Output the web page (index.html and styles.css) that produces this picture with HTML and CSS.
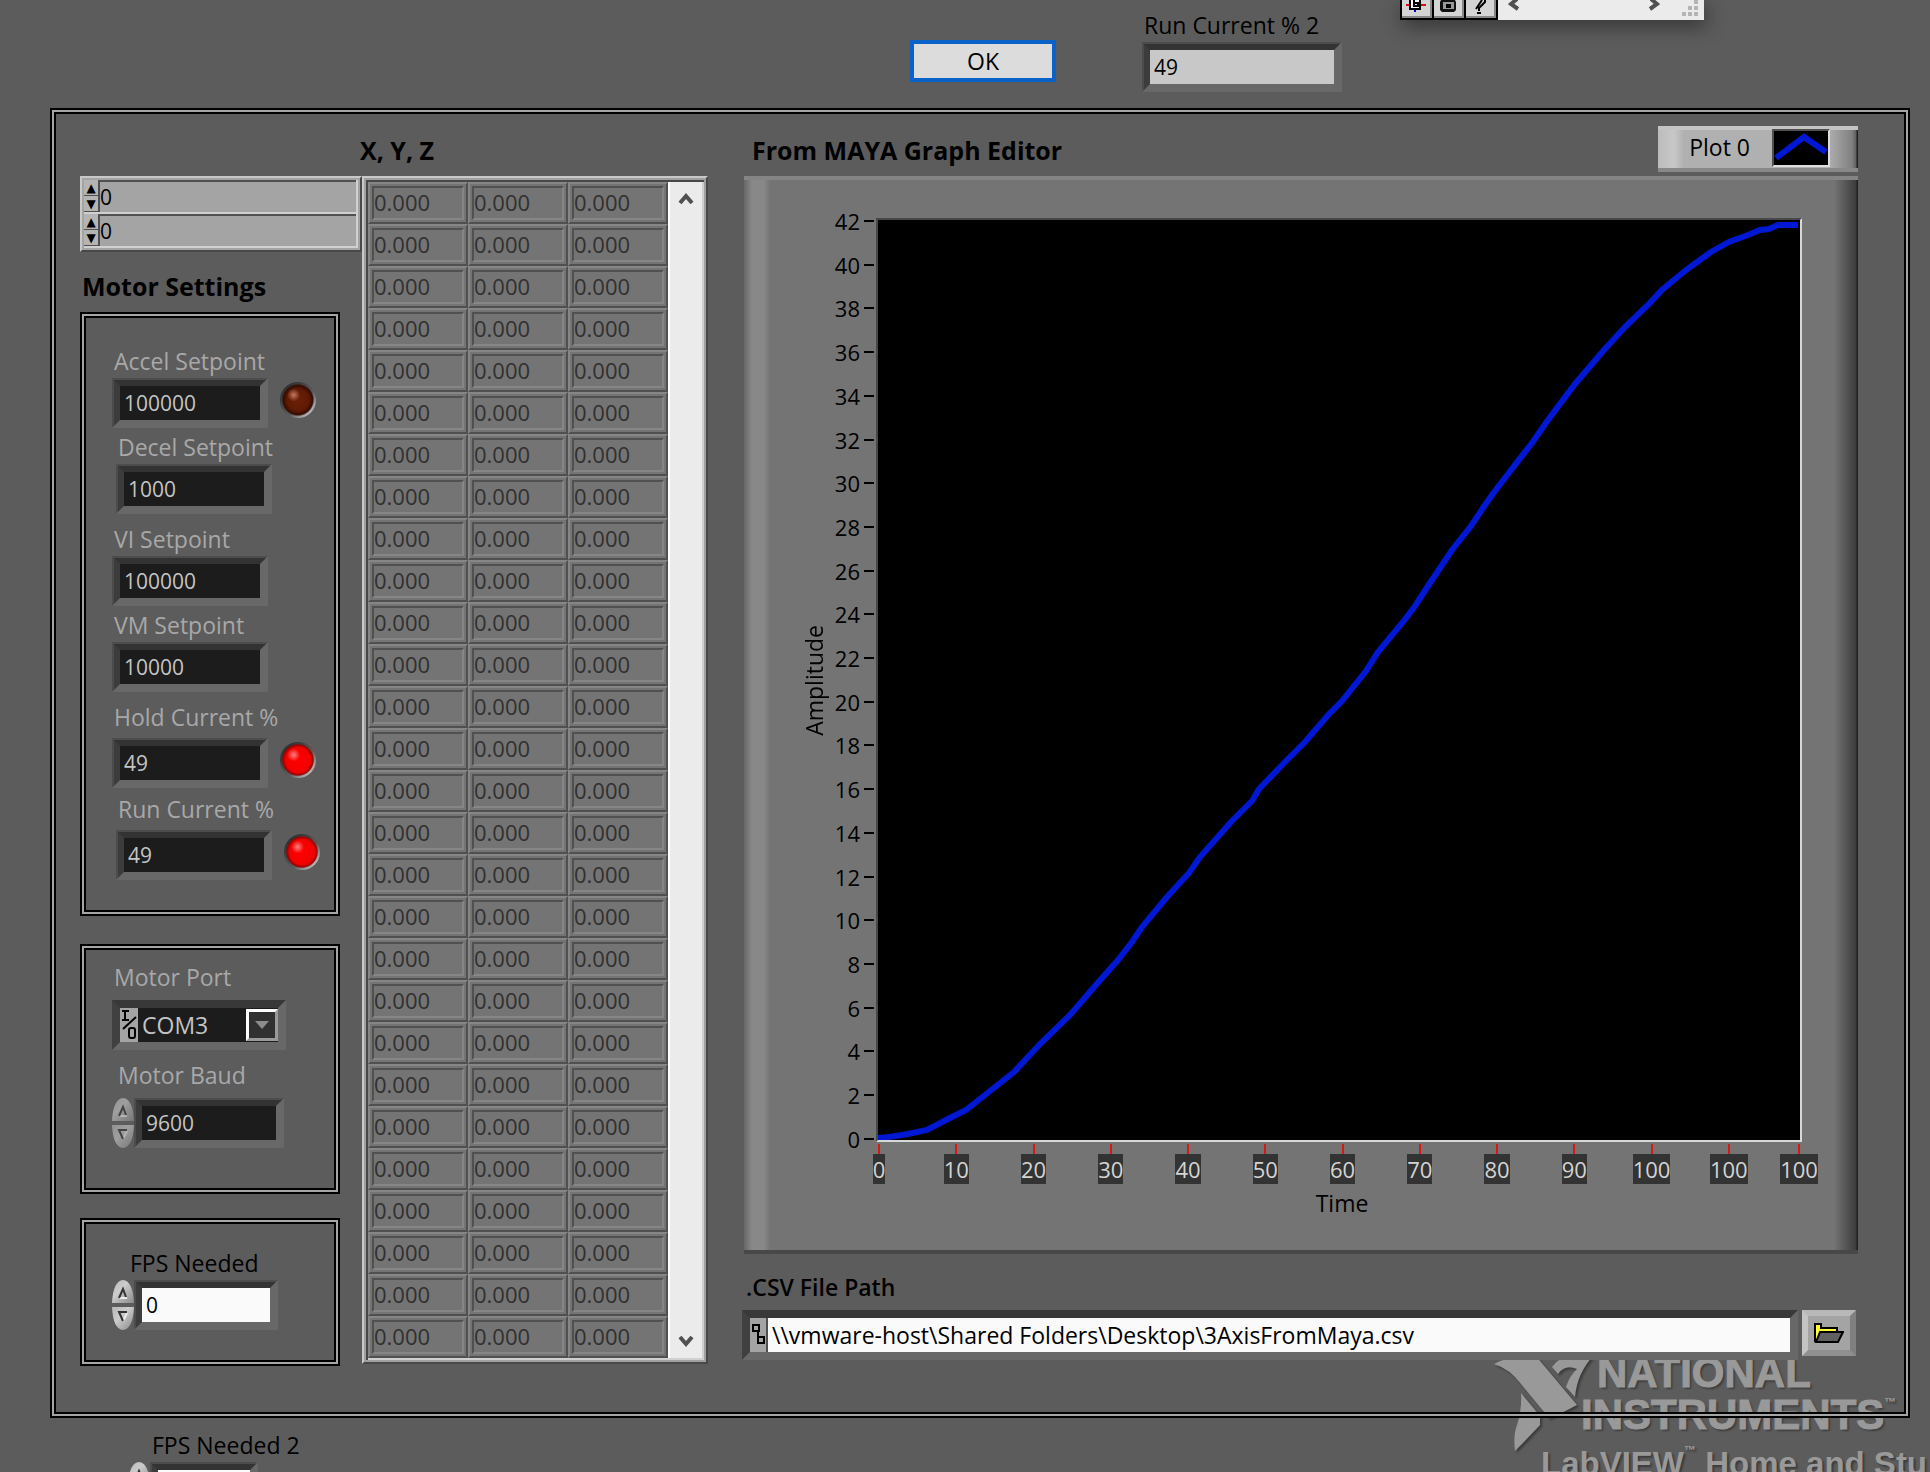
FILE: index.html
```html
<!DOCTYPE html>
<html lang="en">
<head>
<meta charset="utf-8">
<title>Motor Control</title>
<link rel="stylesheet" href="styles.css">
</head>
<body>
<div class="watermark" aria-hidden="true">
  <svg class="eagle" width="104" height="102" viewBox="0 0 104 102">
    <path d="M1 9 Q18 0 42 0 L84 50 Q70 58 56 63 L28 29 Q17 14 1 9Z"/>
    <path d="M59 12 Q68 0 82 0 L101 0 Q84 18 82 42 L73 32 Q77 20 84 14 Q72 9 65 19Z"/>
    <path d="M28 38 L47 61 L47 70 Q32 86 22 96 Q20 80 24 70 Q29 55 28 38Z"/>
  </svg>
  <div class="brand">
    <div class="brand-line brand-first">NATIONAL</div>
    <div class="brand-line">INSTRUMENTS<sup>™</sup></div>
  </div>
  <div class="product">LabVIEW<sup>™</sup> Home and Stu</div>
</div>

<div class="palette">
  <button class="tool" aria-label="Probe"><svg width="28" height="18" viewBox="0 0 28 18"><path d="M4 5h20" stroke="#d01010" stroke-width="2"/><path d="M8 0v9h10V0" fill="#fff" stroke="#000" stroke-width="2"/><path d="M12 0v6h4V3h-3" fill="none" stroke="#000" stroke-width="2"/><path d="M12 10h2v2h-2z" fill="#00c"/></svg></button>
  <button class="tool" aria-label="Lock"><svg width="28" height="18" viewBox="0 0 28 18"><path d="M7 0h14l1 2v8l-2 2H8l-2-2V2z" fill="#111"/><path d="M9 2h11v7H9z" fill="#999"/><path d="M12 4h5v4h-5z"/></svg></button>
  <button class="tool" aria-label="Help"><svg width="28" height="18" viewBox="0 0 28 18"><path d="M13 11V8l6-6V0M10 9l6-9" fill="none" stroke="#000" stroke-width="2"/><path d="M11 12h4v2h-4z"/></svg></button>
  <div class="hscroll">
    <svg width="12" height="12" viewBox="0 0 12 12"><path d="M9 -1L3 4l7 5" fill="none" stroke="#505050" stroke-width="4"/></svg>
    <svg width="12" height="12" viewBox="0 0 12 12"><path d="M3 -1l6 5-7 5" fill="none" stroke="#505050" stroke-width="4"/></svg>
  </div>
  <svg class="grip" width="16" height="16" viewBox="0 0 16 16"><path d="M12 0h4v4h-4zM6 6h4v4H6zM12 6h4v4h-4zM0 12h4v4H0zM6 12h4v4H6zM12 12h4v4h-4z" fill="#b4b4b4"/></svg>
</div>

<header class="top">
  <button class="ok">OK</button>
  <div class="group">
    <label for="run2">Run Current % 2</label>
    <div class="bevel wide"><input id="run2" class="silver" value="49"></div>
  </div>
</header>

<main class="panel frame">
  <section class="settings">
    <div class="cluster">
      <div class="cluster-row"><span class="step"><button aria-label="Increase row">▲</button><button aria-label="Decrease row">▼</button></span><input aria-label="Row index" value="0"></div>
      <div class="cluster-row"><span class="step"><button aria-label="Increase column">▲</button><button aria-label="Decrease column">▼</button></span><input aria-label="Column index" value="0"></div>
    </div>
    <h2 class="settings-title">Motor Settings</h2>

    <div class="frame box motor">
      <div class="group"><label for="accel">Accel Setpoint</label>
        <div class="line"><div class="bevel"><input id="accel" value="100000"></div><span class="led"></span></div></div>
      <div class="group near inset"><label for="decel">Decel Setpoint</label>
        <div class="bevel"><input id="decel" value="1000"></div></div>
      <div class="group far"><label for="vi">VI Setpoint</label>
        <div class="bevel"><input id="vi" value="100000"></div></div>
      <div class="group near"><label for="vm">VM Setpoint</label>
        <div class="bevel"><input id="vm" value="10000"></div></div>
      <div class="group far loose"><label for="hold">Hold Current %</label>
        <div class="line"><div class="bevel"><input id="hold" value="49"></div><span class="led on"></span></div></div>
      <div class="group near loose inset"><label for="run">Run Current %</label>
        <div class="line"><div class="bevel"><input id="run" value="49"></div><span class="led on"></span></div></div>
    </div>

    <div class="frame box port">
      <div class="group"><label for="port">Motor Port</label>
        <div class="bevel combo">
          <svg width="18" height="34" viewBox="0 0 18 34"><rect width="18" height="34" fill="#a4a4a4"/><path d="M2 3h7M5 3v9M2 12h7M3 21L16 9" fill="none" stroke="#000" stroke-width="2"/><rect x="9" y="20" width="6" height="10" rx="2" fill="none" stroke="#000" stroke-width="2"/></svg>
          <select id="port"><option>COM3</option></select>
          <span class="drop"><svg width="14" height="8" viewBox="0 0 14 8"><path d="M0 0h14L7 8z" fill="#8c8c8c"/></svg></span>
        </div>
      </div>
      <div class="group baud"><label for="baud">Motor Baud</label>
        <div class="line">
          <svg class="knob" width="22" height="50" viewBox="0 0 22 50"><use href="#knob" class="knob-dim"/></svg>
          <div class="bevel"><input id="baud" value="9600"></div>
        </div>
      </div>
    </div>

    <div class="frame box fps">
      <div class="group"><label for="fps">FPS Needed</label>
        <div class="line">
          <svg class="knob" width="22" height="50" viewBox="0 0 22 50"><use href="#knob"/></svg>
          <div class="bevel"><input id="fps" class="white" value="0"></div>
        </div>
      </div>
    </div>
  </section>

  <section class="matrix">
    <h2 class="heading">X, Y, Z</h2>
    <div class="matrix-box">
      <table><tbody id="cells"></tbody></table>
      <div class="vscroll">
        <button aria-label="Scroll up"><svg width="16" height="14" viewBox="0 0 16 14"><path d="M2 11l6-7 6 7" fill="none" stroke="#505050" stroke-width="4"/></svg></button>
        <button aria-label="Scroll down"><svg width="16" height="14" viewBox="0 0 16 14"><path d="M2 3l6 7 6-7" fill="none" stroke="#505050" stroke-width="4"/></svg></button>
      </div>
    </div>
  </section>

  <section class="chart">
    <div class="chart-head">
      <h2 class="heading">From MAYA Graph Editor</h2>
      <div class="legend"><span>Plot 0</span>
        <svg width="58" height="38" viewBox="0 0 58 38"><rect width="58" height="38" fill="#ddd"/><path d="M0 0h58L56 2H2v34l-2 2z" fill="#505050"/><rect x="2" y="2" width="54" height="34"/><path d="M4 29L32 8 54 23" fill="none" stroke="#0018d4" stroke-width="6"/></svg>
      </div>
    </div>
    <div class="graph">
      <div class="y-title">Amplitude</div>
      <ol class="y-axis">
        <li>42</li><li>40</li><li>38</li><li>36</li><li>34</li><li>32</li><li>30</li><li>28</li><li>26</li><li>24</li><li>22</li><li>20</li><li>18</li><li>16</li><li>14</li><li>12</li><li>10</li><li>8</li><li>6</li><li>4</li><li>2</li><li>0</li>
      </ol>
      <div class="plot">
        <svg viewBox="0 0 922 920" preserveAspectRatio="none">
          <polyline points="0,918 11,917 30,914 49,910 70,899 88,890 107,875 136,852 162,824 193,794 217,766 240,740 254,722 264,707 289,677 311,653 322,637 353,602 374,581 381,569 408,541 427,522 451,494 464,481 488,451 500,432 525,402 537,386 550,366 574,330 593,306 605,288 614,275 630,254 654,223 670,200 697,164 726,130 747,107 771,84 784,70 808,50 833,32 851,22 870,15 882,10 891,9 900,5 920,5"/>
        </svg>
      </div>
      <ol class="x-axis">
        <li><span>0</span></li><li><span>10</span></li><li><span>20</span></li><li><span>30</span></li><li><span>40</span></li><li><span>50</span></li><li><span>60</span></li><li><span>70</span></li><li><span>80</span></li><li><span>90</span></li><li><span>100</span></li><li><span>100</span></li><li><span>100</span></li>
      </ol>
      <div class="x-title">Time</div>
    </div>
    <label class="path-label" for="path">.CSV File Path</label>
    <div class="path-row">
      <div class="bevel path">
        <svg width="18" height="34" viewBox="0 0 18 34"><rect width="18" height="34" fill="#a4a4a4"/><path d="M17 0v34" stroke="#505050" stroke-width="2"/><path d="M3 7h6v6H3zM9 19h5v6H8v-6zM8 13v6" fill="none" stroke="#000" stroke-width="2"/></svg>
        <input id="path" class="white" value="\\vmware-host\Shared Folders\Desktop\3AxisFromMaya.csv">
      </div>
      <button class="browse" aria-label="Browse"><svg width="30" height="20" viewBox="0 0 30 20"><path d="M1 19V1h6v4h16v4" fill="#ff3" stroke="#000" stroke-width="2"/><path d="M2 19L6 9h23l-5 10z" fill="#606060" stroke="#000" stroke-width="2"/></svg></button>
    </div>
  </section>
</main>

<footer class="bottom">
  <label for="fps2">FPS Needed 2</label>
  <div class="line">
    <svg class="knob" width="22" height="50" viewBox="0 0 22 50">
      <defs>
        <linearGradient id="metal" x1="0" x2="1" y1="0" y2="1"><stop offset="0" stop-color="#b8b8b8"/><stop offset=".4" stop-color="#ccc"/><stop offset="1" stop-color="#888"/></linearGradient>
        <g id="knob">
          <path d="M0 23Q1 1 11 0Q21 1 22 23z" fill="url(#metal)"/>
          <path d="M0 27Q1 49 11 50Q21 49 22 27z" fill="url(#metal)"/>
          <path d="M7 18h8" stroke="#eee" stroke-width="2"/>
          <path d="M7 18l4-9 3 8" fill="none" stroke="#333" stroke-width="2"/>
          <path d="M15 33l-4 8" stroke="#eee" stroke-width="2"/>
          <path d="M15 32H7l4 9" fill="none" stroke="#333" stroke-width="2"/>
        </g>
      </defs>
      <use href="#knob"/>
    </svg>
    <div class="bevel"><input id="fps2" class="white" value="0"></div>
  </div>
</footer>
<script src="script.js"></script>
</body>
</html>
```
FILE: styles.css
```css
* { box-sizing: border-box; }

body {
  margin: 0;
  height: 100vh;
  overflow: hidden;
  position: relative;
  background: #5c5c5c;
  color: #000;
  font-family: "Open Sans", "Noto Sans", sans-serif;
  font-size: 23px;
  line-height: 30px;
}

h2 { margin: 0; font-size: 25px; font-weight: 700; line-height: 28px; }
ol { margin: 0; padding: 0; list-style: none; }
button, input, select { font: inherit; color: inherit; border-radius: 0; }
button { padding: 0; border: 0; background: none; }
input { min-width: 0; outline: 0; font-size: 21px; }
label { display: block; white-space: nowrap; line-height: 26px; margin-bottom: 4px; }
svg { display: block; flex: none; }

.frame {
  border: 2px solid #000;
  box-shadow: inset 0 0 0 2px #a6a6a6, inset 0 0 0 4px #000;
}

/* Sunken fields */
.bevel {
  display: flex;
  width: 156px;
  height: 50px;
  border: 2px solid;
  border-color: #4c4c4c #686868 #686868 #4c4c4c;
}
.bevel input {
  width: 100%;
  border: 6px solid;
  border-color: #333 #686868 #686868 #3c3c3c;
  padding: 0 4px;
  background: #1c1c1c;
  color: #c4c4c4;
}
.bevel input.silver { background: #c8c8c8; color: #000; }
.bevel input.white { background: #fafafa; color: #000; }
.bevel.wide { width: 200px; }
.line { display: flex; }

/* Top strip */
.top {
  display: flex;
  justify-content: center;
  gap: 86px;
  height: 108px;
  padding: 12px 0 0 322px;
}
.ok {
  width: 146px;
  height: 42px;
  margin-top: 28px;
  border: 4px solid #0a62c8;
  background: #dcdcdc;
  line-height: 32px;
}
.top label { padding-left: 2px; }

/* Main panel */
.panel {
  position: relative;
  z-index: 1;
  display: grid;
  grid-template-columns: 282px 346px minmax(0, 1fr);
  margin: 0 20px 0 50px;
  padding: 4px 50px 50px 28px;
}
.heading { padding-top: 22px; height: 62px; }
.matrix .heading { margin-left: -2px; }

.settings { padding-top: 62px; }
.settings-title { padding: 20px 0 10px 2px; height: 60px; }

.cluster {
  height: 76px;
  border: 2px solid;
  border-color: #c8c8c8 #484848 #484848 #c8c8c8;
  background: #a4a4a4;
  padding: 2px;
}
.cluster-row { display: flex; height: 34px; border-bottom: 2px solid #d0d0d0; border-right: 2px solid #d0d0d0; }
.cluster-row input {
  flex: 1;
  border: 0;
  border-top: 2px solid #505050;
  padding: 0;
  background: #a4a4a4;
}
.step { width: 16px; border-right: 2px solid #505050; background: #b4b4b4; display: grid; }
.step button { font: 12px/16px "DejaVu Sans", sans-serif; border-bottom: 1px solid #505050; overflow: hidden; }

.box { width: 260px; padding: 4px; }
.box .group { padding-left: 26px; }
.box .group.inset { padding-left: 30px; }
.box label { padding-left: 2px; }
.near { margin-top: 6px; }
.far { margin-top: 12px; }
.loose label { margin-bottom: 8px; }
.near.loose { margin-top: 8px; }

.motor { height: 604px; padding-top: 34px; }
.motor label, .port label { color: #a8a8a8; }

.led {
  width: 36px;
  height: 36px;
  margin: 4px 0 0 12px;
  border-radius: 50%;
  background:
    radial-gradient(circle at 38% 36%, #c87860 0, transparent 20%),
    radial-gradient(circle closest-side at 50% 50%, #6c2008 0, #601a04 60%, #340c00 82%, transparent 90%),
    linear-gradient(135deg, #2c2c2c 10%, #5c5c5c 60%, #c8c8c8 90%);
}
.led.on {
  background:
    radial-gradient(circle at 38% 36%, #ff8080 0, transparent 20%),
    radial-gradient(circle closest-side at 50% 50%, #f00 0, #f40000 68%, #900 84%, transparent 90%),
    linear-gradient(135deg, #2c2c2c 10%, #5c5c5c 60%, #c8c8c8 90%);
}

.port { height: 250px; margin-top: 28px; padding-top: 18px; }
.port label { margin-bottom: 10px; }
.combo { width: 174px; border-width: 8px; border-color: #383838 #686868 #686868 #404040; background: #1c1c1c; }
.combo select {
  flex: 1;
  min-width: 0;
  appearance: none;
  border: 0;
  padding: 0 4px;
  background: #1c1c1c;
  color: #c4c4c4;
}
.drop {
  width: 32px;
  border: 3px solid;
  border-color: #fff #999 #999 #fff;
  margin: 1px 0;
  background: #303030;
  display: grid;
  place-items: center;
}
.port .baud { margin-top: 12px; }
.baud label { padding-left: 6px; }
.baud .bevel { width: 150px; }
.knob-dim { opacity: .6; }

.fps { height: 148px; margin-top: 24px; padding-top: 30px; }
.fps label { padding-left: 18px; }
.fps .bevel { width: 144px; }

/* Array of samples */
.matrix-box {
  display: flex;
  border: 2px solid;
  border-color: #c8c8c8 #484848 #484848 #c8c8c8;
  box-shadow: inset 0 0 0 2px #a0a0a0, inset 2px 2px 0 2px #484848, inset -2px -2px 0 2px #d0d0d0;
  padding: 4px;
}
.matrix table { border-collapse: separate; border-spacing: 0; width: 300px; }
.matrix td {
  width: 100px;
  height: 42px;
  padding: 2px;
  border: 2px solid;
  border-color: #868686 #505050 #505050 #868686;
  background: #747474;
}
.matrix td span {
  display: block;
  height: 34px;
  border: 2px solid;
  border-color: #505050 #868686 #868686 #505050;
  color: #303030;
  font-size: 22px;
  line-height: 28px;
}
.vscroll {
  flex: 1;
  display: flex;
  flex-direction: column;
  justify-content: space-between;
  background: #ebebeb;
  border-left: 2px solid #fff;
}
.vscroll button { height: 34px; display: grid; place-items: center; }

/* Graph column */
.chart { display: flex; flex-direction: column; padding-left: 34px; }
.chart-head { display: flex; justify-content: space-between; padding-left: 10px; height: 62px; }
.legend {
  display: flex;
  align-items: center;
  justify-content: flex-end;
  gap: 22px;
  width: 200px;
  height: 46px;
  margin-top: 12px;
  padding: 0 28px 2px 0;
  background: linear-gradient(90deg, #bcbcbc, #c8c8c8 16px, #b0b0b0 26px, #b0b0b0 170px, #808080 194px, #606060 198px, #202020 199px);
  border-top: 4px solid #c4c4c4;
  border-bottom: 4px solid #888;
}
.legend span { padding-bottom: 2px; }
.graph {
  flex: 1;
  display: grid;
  grid-template-columns: 32px 46px minmax(0, 1fr);
  grid-template-rows: minmax(0, 1fr) 46px 62px;
  margin-left: 2px;
  padding: 38px 56px 0 54px;
  border-top: 4px solid #848484;
  border-bottom: 4px solid #484848;
  background:
    linear-gradient(90deg, #747474, #3c3c3c 22px, #202020 23px) right / 24px 100% no-repeat,
    linear-gradient(90deg, #686868, #888 8px, #888 20px, #747474 26px);
}
.y-title { writing-mode: vertical-rl; transform: rotate(180deg); justify-self: center; align-self: center; line-height: 32px; }
.y-axis { display: flex; flex-direction: column; justify-content: space-between; padding: 3px 2px 3px 0; font-size: 22px; }
.y-axis li { display: flex; align-items: center; justify-content: flex-end; gap: 4px; height: 0; }
.y-axis li::after { content: ""; width: 10px; height: 2px; background: #000; }
.plot {
  border: 2px solid;
  border-color: #484848 #d8d8d8 #d8d8d8 #484848;
  background: #000;
}
.plot svg { width: 100%; height: 100%; }
.plot polyline { fill: none; stroke: #0018d4; stroke-width: 6; vector-effect: non-scaling-stroke; }
.x-axis {
  grid-column: 3;
  display: grid;
  grid-template-columns: repeat(11, 77fr) 70fr 0;
  padding: 2px 3px 0;
  font-size: 22px;
}
.x-axis li { display: flex; flex-direction: column; align-items: center; width: 0; }
.x-axis li::before { content: ""; width: 2px; height: 10px; background: #d81818; }
.x-axis span { background: #333; color: #d4d4d4; }
.x-title { grid-column: 3; text-align: center; padding-left: 6px; }

.path-label { font-weight: 600; padding: 20px 0 0 4px; margin-bottom: 10px; }
.path-row { display: flex; align-items: flex-start; gap: 4px; height: 56px; }
.path { flex: 1; border-width: 8px; border-color: #383838 #686868 #686868 #404040; }
.bevel.path input { border: 0; font-size: 23px; }
.browse {
  width: 54px;
  height: 46px;
  margin-right: 2px;
  display: grid;
  place-items: center;
  background: #a4a4a4;
  border: 6px solid;
  border-color: #b8b8b8 #808080 #909090 #c4c4c4;
}

/* Bottom strip */
.bottom { padding: 14px 0 0 128px; }
.bottom label { padding-left: 24px; }
.bottom .bevel { width: 108px; }

/* Floating tools palette */
.palette {
  position: absolute;
  top: 0;
  left: 1400px;
  z-index: 2;
  width: 304px;
  height: 20px;
  display: flex;
  background: #ebebeb;
  box-shadow: 2px 6px 20px rgba(0, 0, 0, .45);
}
.tool {
  width: 32px;
  height: 20px;
  flex: none;
  border-left: 2px solid #000;
  border-bottom: 2px solid #000;
  background: #d4d4d4;
  box-shadow: inset -2px -2px 0 #888;
}
.tool:nth-child(3) { border-right: 2px solid #000; width: 34px; }
.hscroll { flex: 1; display: flex; justify-content: space-between; padding: 0 44px 0 10px; }
.grip { position: absolute; right: 6px; bottom: 4px; }

/* Product watermark on the panel background */
.watermark {
  position: absolute;
  right: 0;
  top: 1352px;
  z-index: 0;
  width: 437px;
  height: 120px;
  overflow: hidden;
  color: #999;
  font-family: "Liberation Sans", Arial, sans-serif;
  font-weight: 700;
  white-space: nowrap;
  text-shadow: 2px 2px 2px rgba(0, 0, 0, .35);
}
.eagle { position: absolute; left: 0; top: 3px; fill: #999; filter: drop-shadow(2px 2px 1px rgba(0, 0, 0, .35)); }
.brand { padding-left: 88px; font-size: 42px; line-height: 42px; -webkit-text-stroke: 1px #999; }
.brand-first { padding-left: 16px; }
.brand sup, .product sup { font-size: 12px; line-height: 0; vertical-align: top; position: relative; top: 8px; -webkit-text-stroke: 0; }
.product { padding: 6px 0 0 48px; font-size: 33px; line-height: 44px; }
```
FILE: script.js
```js
const body = document.getElementById("cells");
for (let r = 0; r < 28; r++) {
  const row = body.insertRow();
  for (let c = 0; c < 3; c++) {
    const value = document.createElement("span");
    value.textContent = (0).toFixed(3);
    row.insertCell().append(value);
  }
}
```
